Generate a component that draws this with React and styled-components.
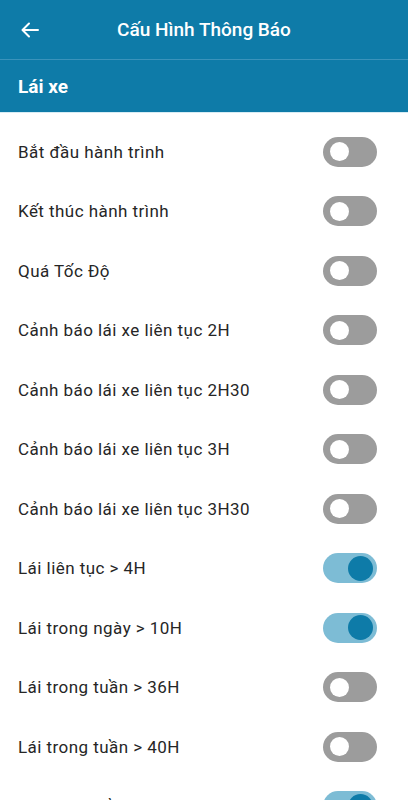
import React, { useState } from 'react'
import styled, { createGlobalStyle } from 'styled-components'

const GlobalStyle = createGlobalStyle`
  body {
    margin: 0;
    background: #fff;
    font-family: Roboto, 'Noto Sans', sans-serif;
  }
`

const Page = styled.div`
  width: 408px;
  min-height: 800px;
  background: #fff;
`

const TopBar = styled.header`
  height: 59px;
  background: #0e7ba8;
  border-bottom: 1px solid #3a93bb;
  display: flex;
  align-items: center;
  position: relative;
  justify-content: center;
`

const BackButton = styled.button`
  position: absolute;
  left: 14px;
  top: 50%;
  transform: translateY(-50%);
  width: 32px;
  height: 32px;
  display: flex;
  align-items: center;
  justify-content: center;
  background: none;
  border: 0;
  padding: 0;
  color: #fff;
`

const Title = styled.h1`
  margin: 0;
  font-size: 19px;
  font-weight: 500;
  color: #fff;
`

const SectionBar = styled.div`
  height: 52px;
  background: #0e7ba8;
  display: flex;
  align-items: center;
  padding: 0 18px;
  font-size: 19px;
  font-weight: 700;
  color: #fff;
  border-bottom: 1px solid #d7ecf4;
`

const List = styled.ul`
  list-style: none;
  margin: 0;
  padding: 9px 0 0;
`

const Row = styled.li`
  height: 59.5px;
  display: flex;
  align-items: center;
  justify-content: space-between;
  padding: 0 31px 0 18px;
`

const Label = styled.span`
  font-size: 17px;
  color: #262626;
  letter-spacing: 0.45px;
`

const Track = styled.button`
  width: 54px;
  height: 30px;
  border-radius: 15px;
  border: 0;
  padding: 0 3px;
  display: flex;
  align-items: center;
  justify-content: ${(p) => (p.$on ? 'flex-end' : 'flex-start')};
  background: ${(p) => (p.$on ? '#7dbcd5' : '#9c9c9c')};
  cursor: pointer;
`

const Knob = styled.span`
  width: ${(p) => (p.$on ? '25px' : '19px')};
  height: ${(p) => (p.$on ? '25px' : '19px')};
  margin: ${(p) => (p.$on ? '0 1px 0 0' : '0 0 0 4px')};
  border-radius: 50%;
  background: ${(p) => (p.$on ? '#0e7ba8' : '#fff')};
`

const items = [
  ['Bắt đầu hành trình', false],
  ['Kết thúc hành trình', false],
  ['Quá Tốc Độ', false],
  ['Cảnh báo lái xe liên tục 2H', false],
  ['Cảnh báo lái xe liên tục 2H30', false],
  ['Cảnh báo lái xe liên tục 3H', false],
  ['Cảnh báo lái xe liên tục 3H30', false],
  ['Lái liên tục > 4H', true],
  ['Lái trong ngày > 10H', true],
  ['Lái trong tuần > 36H', false],
  ['Lái trong tuần > 40H', false],
  ['Lái trong tuần > 48H', true],
]

const Switch = ({ on, onToggle }) => (
  <Track $on={on} onClick={onToggle} aria-pressed={on}>
    <Knob $on={on} />
  </Track>
)

const App = () => {
  const [state, setState] = useState(items.map((i) => i[1]))

  const toggle = (idx) =>
    setState((s) => s.map((v, i) => (i === idx ? !v : v)))

  return (
    <Page>
      <GlobalStyle />
      <TopBar>
        <BackButton aria-label="back">
          <svg width="18" height="16" viewBox="0 0 18 16" fill="none">
            <path
              d="M17 8H2M8 1.5L1.5 8L8 14.5"
              stroke="#fff"
              strokeWidth="2"
              strokeLinecap="round"
              strokeLinejoin="round"
            />
          </svg>
        </BackButton>
        <Title>Cấu Hình Thông Báo</Title>
      </TopBar>
      <SectionBar>Lái xe</SectionBar>
      <List>
        {items.map(([label], i) => (
          <Row key={label}>
            <Label>{label}</Label>
            <Switch on={state[i]} onToggle={() => toggle(i)} />
          </Row>
        ))}
      </List>
    </Page>
  )
}

export default App
